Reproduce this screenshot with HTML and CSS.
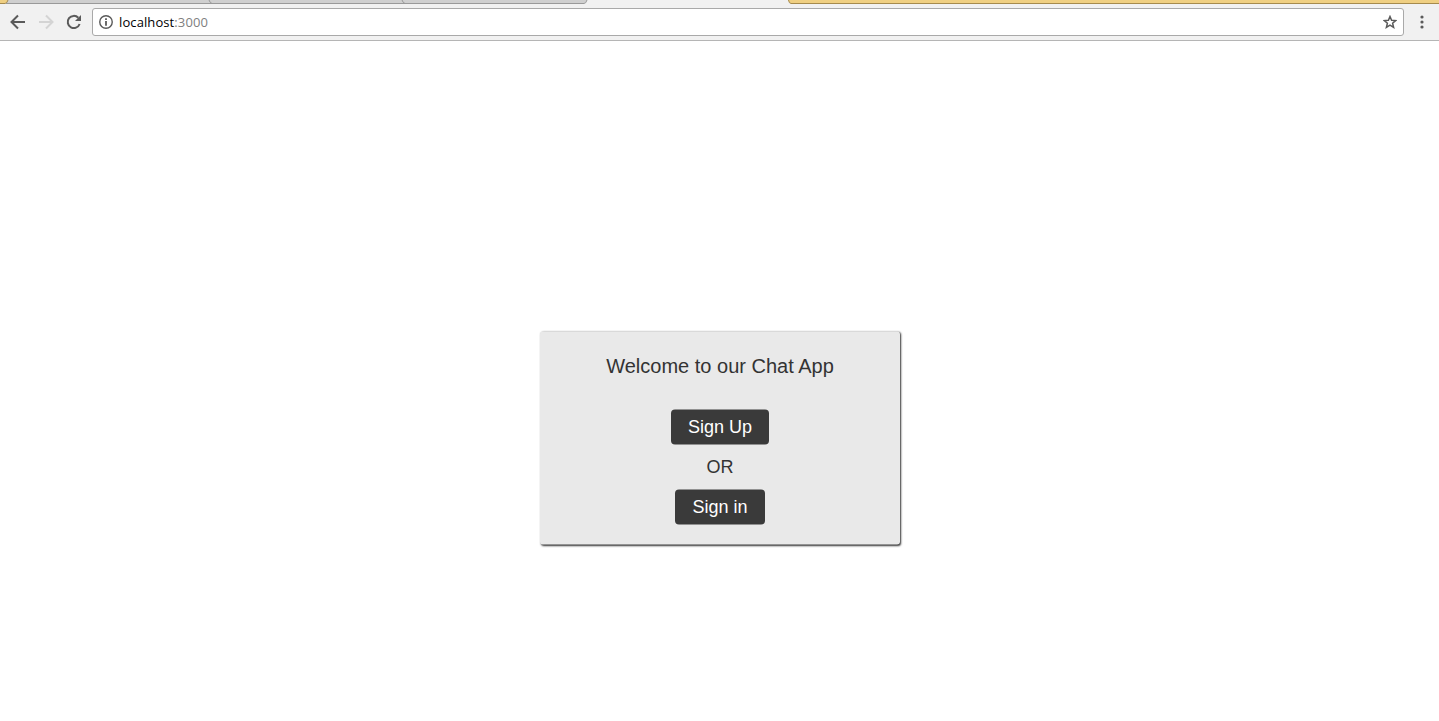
FILE: index.html
```html
<!DOCTYPE html>
<html lang="en">
<head>
<meta charset="utf-8">
<title>Chat App</title>
<link rel="stylesheet" href="styles.css">
</head>
<body>
<header class="browser">
  <svg class="tabs" width="1439" height="4" viewBox="0 0 1439 4">
    <rect width="1439" height="4" fill="#f1f1f1"/>
    <path d="M0 0H8L6.500 3H0z" fill="#efcf82"/>
    <path d="M8 0H587L585 3H6.500z" fill="#cfcfcf"/>
    <path d="M788 0H1439V3H790z" fill="#efcf82"/>
    <path d="M0 3.500H5Q7 3.500 8 0" fill="none" stroke="#a58a4d"/>
    <path d="M6 3.500H584Q586 3.500 587 0M209 0Q210 3 212 3.500M402 0Q403 3 405 3.500" fill="none" stroke="#999"/>
    <path d="M788.500 0Q789 3.500 791 3.500H1439" fill="none" stroke="#a58a4d"/>
  </svg>
  <nav class="toolbar">
    <svg class="icon" viewBox="0 0 16 16"><path d="M15 8H2M8 1.500L1.500 8L8 14.500" fill="none" stroke="#5a5a5a" stroke-width="2"/></svg>
    <svg class="icon" viewBox="0 0 16 16"><path d="M1 8H14M8 1.500L14.500 8L8 14.500" fill="none" stroke="#d4d4d4" stroke-width="2"/></svg>
    <svg class="icon" viewBox="0 0 16 16"><path d="M13.600 10A6.100 6.100 0 1 1 12.300 3.800" fill="none" stroke="#5a5a5a" stroke-width="2"/><path d="M15 1V7H9z" fill="#5a5a5a"/></svg>
    <div class="address">
      <svg class="info" viewBox="0 0 14 14"><circle cx="7" cy="7" r="6.250" fill="none" stroke="#5a5a5a" stroke-width="1.400"/><path d="M6.100 3.200H7.900V5H6.100zM6.100 6H7.900V10.800H6.100z" fill="#5a5a5a"/></svg>
      <span class="url">localhost<span class="port">:3000</span></span>
      <svg class="star" viewBox="0 0 14 14"><path d="M7 1.500L8.600 5.200L12.700 5.600L9.600 8.300L10.600 12.400L7 10.200L3.400 12.400L4.400 8.300L1.300 5.600L5.400 5.200z" fill="none" stroke="#5a5a5a" stroke-width="1.500"/></svg>
    </div>
    <svg class="more" viewBox="0 0 4 14"><g fill="#5a5a5a"><circle cx="2" cy="2" r="1.600"/><circle cx="2" cy="7" r="1.600"/><circle cx="2" cy="12" r="1.600"/></g></svg>
  </nav>
</header>
<main class="page">
  <section class="card">
    <h1 class="title">Welcome to our Chat App</h1>
    <button class="button">Sign Up</button>
    <p class="or">OR</p>
    <button class="button">Sign in</button>
  </section>
</main>
</body>
</html>
```
FILE: styles.css
```css
* { box-sizing: border-box; }
body {
  margin: 0;
  height: 721px;
  overflow: hidden;
  display: flex;
  flex-direction: column;
  background: #fff;
  color: #333;
  font-family: "Liberation Sans", Arial, sans-serif;
}
svg { display: block; flex: none; }
.browser {
  height: 41px;
  background: #f1f1f1;
  border-bottom: 1px solid #b5b5b5;
}
.toolbar {
  display: flex;
  align-items: center;
  height: 36px;
  padding: 0 15px 0 10px;
}
.icon { width: 16px; height: 16px; margin-right: 12px; }
.icon + .address { margin-left: -2px; }
.address {
  display: flex;
  align-items: center;
  flex: 1;
  height: 28px;
  padding: 0 6px;
  background: #fff;
  border: 1px solid #a9a9a9;
  border-radius: 3px;
}
.info { width: 14px; height: 14px; }
.url {
  flex: 1;
  margin-left: 6px;
  color: #000;
  font: 13px/18px "Open Sans", "Noto Sans", sans-serif;
  letter-spacing: 0.1px;
}
.port { color: #808080; }
.star { width: 14px; height: 14px; }
.more { width: 4px; height: 14px; margin-left: 16px; }
.page {
  display: flex;
  flex: 1;
  align-items: flex-start;
  justify-content: center;
  padding: 291px 0 0 1px;
}
.card {
  display: flex;
  flex-direction: column;
  align-items: center;
  width: 360px;
  height: 213px;
  padding-top: 22px;
  background: #e9e9e9;
  border-radius: 3px;
  box-shadow: 1px 1px 2px #333;
  transform: translateY(-0.5px);
}
.title {
  margin: 0 0 32px;
  font-size: 20px;
  font-weight: 400;
  line-height: 24px;
}
.button {
  height: 35px;
  padding: 0 17px;
  border: 0;
  border-radius: 4px;
  background: #3a3a3a;
  color: #fff;
  font: 18px/35px "Liberation Sans", Arial, sans-serif;
}
.or {
  margin: 12px 0 13px;
  font-size: 18px;
  line-height: 20px;
}
```
